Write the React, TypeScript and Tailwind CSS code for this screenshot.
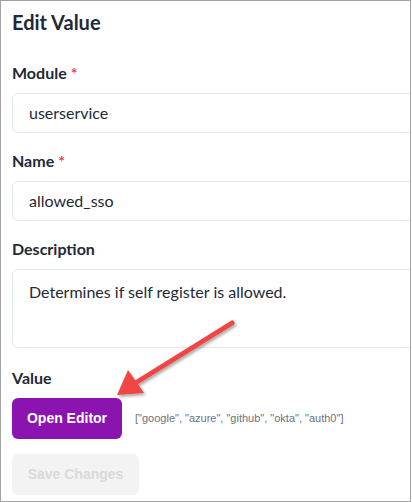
import React from 'react';

const uiFont = { fontFamily: 'Lato, "Noto Sans", sans-serif' };
const btnFont = { fontFamily: '"Liberation Sans", Arial, sans-serif' };

function FieldLabel({ text, required }: { text: string; required?: boolean }) {
  return (
    <label className="block text-[16px] font-bold leading-5 text-[#1f2937]">
      {text}
      {required && <span className="ml-1 text-[#ef4444]">*</span>}
    </label>
  );
}

export default function App() {
  const providers = '["google", "azure", "github", "okta", "auth0"]';

  return (
    <div
      className="relative w-[411px] h-[502px] overflow-hidden border border-[#a3a3a3] bg-white"
      style={uiFont}
    >
      <div className="w-[440px] pl-[11px] pt-[7px]">
        <h1 className="text-[20px] font-bold leading-7 text-[#1f2937]">Edit Value</h1>

        {/* Module */}
        <div className="mt-[27px]">
          <FieldLabel text="Module" required />
          <div className="mt-[10px] h-[40px] rounded-md border border-[#e2e8f0] px-4 flex items-center text-[16px] text-[#1f2937]">
            userservice
          </div>
        </div>

        {/* Name */}
        <div className="mt-[18px]">
          <FieldLabel text="Name" required />
          <div className="mt-[10px] h-[40px] rounded-md border border-[#e2e8f0] px-4 flex items-center text-[16px] text-[#1f2937]">
            allowed_sso
          </div>
        </div>

        {/* Description */}
        <div className="mt-[18px]">
          <FieldLabel text="Description" />
          <div className="mt-[10px] h-[79px] rounded-md border border-[#e2e8f0] px-4 pt-[10px] text-[16px] leading-6 text-[#1f2937]">
            Determines if self register is allowed.
          </div>
        </div>

        {/* Value */}
        <div className="mt-[20px]">
          <FieldLabel text="Value" />
          <div className="mt-[10px] flex items-center gap-[13px]">
            <button
              className="h-[41px] w-[110px] rounded-md bg-[#8b14b1] text-[14px] font-bold text-white"
              style={btnFont}
            >
              Open Editor
            </button>
            <span className="text-[11px] text-[#6b7280]" style={btnFont}>
              {providers}
            </span>
          </div>
        </div>

        <button
          disabled
          className="mt-[15px] h-[41px] w-[127px] rounded-md bg-[#f3f3f3] text-[14px] font-bold text-[#d9d9d9]"
          style={btnFont}
        >
          Save Changes
        </button>
      </div>

      {/* Callout arrow pointing at the editor button */}
      <svg className="absolute left-0 top-0" width="412" height="502" viewBox="0 0 412 502">
        <defs>
          <filter id="arrowShadow" x="-20%" y="-20%" width="140%" height="140%">
            <feDropShadow dx="1.5" dy="2" stdDeviation="1.5" floodColor="#000" floodOpacity="0.35" />
          </filter>
        </defs>
        <g filter="url(#arrowShadow)">
          <line x1="231" y1="322" x2="136" y2="381" stroke="#f04545" strokeWidth="5" strokeLinecap="round" />
          <polygon points="116,394 127,369 143,392" fill="#f04545" />
        </g>
      </svg>
    </div>
  );
}
